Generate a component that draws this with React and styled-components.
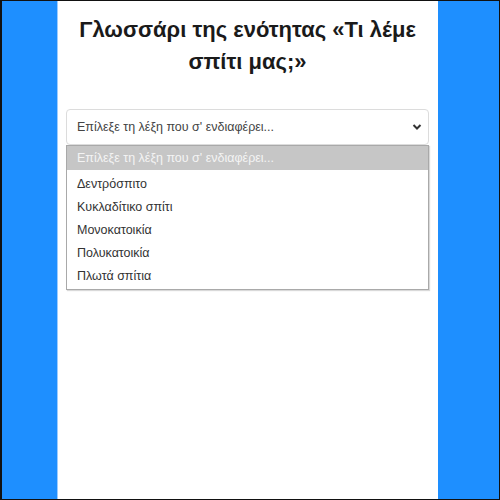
import styled, { createGlobalStyle } from 'styled-components';

const GlobalStyle = createGlobalStyle`
  html, body {
    margin: 0;
    padding: 0;
    background: #fff;
  }
  * {
    box-sizing: border-box;
  }
`;

const words = [
  'Δεντρόσπιτο',
  'Κυκλαδίτικο σπίτι',
  'Μονοκατοικία',
  'Πολυκατοικία',
  'Πλωτά σπίτια',
];

export default function App() {
  return (
    <>
      <GlobalStyle />
      <Frame>
        <Side />
        <Page>
          <Title>
            Γλωσσάρι της ενότητας «Τι λέμε
            <br />
            σπίτι μας;»
          </Title>

          <SelectArea>
            <SelectBox>
              <span>Επίλεξε τη λέξη που σ' ενδιαφέρει...</span>
              <svg width="10" height="8" viewBox="0 0 10 8">
                <path
                  d="M1.5 2 L5 5.5 L8.5 2"
                  fill="none"
                  stroke="#333"
                  strokeWidth="2"
                />
              </svg>
            </SelectBox>

            <OptionList>
              <Option $active>Επίλεξε τη λέξη που σ' ενδιαφέρει...</Option>
              {words.map((w) => (
                <Option key={w}>{w}</Option>
              ))}
            </OptionList>
          </SelectArea>
        </Page>
        <Side />
      </Frame>
    </>
  );
}

const Frame = styled.main`
  display: grid;
  grid-template-columns: 55px 381px 1fr;
  width: 500px;
  height: 500px;
  border: 1px solid #111;
  border-left-width: 2px;
  background: #1e8fff;
  font-family: 'Liberation Sans', Arial, sans-serif;
`;

const Side = styled.div`
  background: #1e8fff;
`;

const Page = styled.section`
  display: flex;
  flex-direction: column;
  align-items: center;
  padding: 13px 9px 0 8px;
  background: #fff;
  border-left: 1px solid #9cccff;
`;

const Title = styled.h1`
  margin: 0;
  font-size: 22px;
  line-height: 32px;
  font-weight: 700;
  color: #1a1a1a;
  text-align: center;
`;

const SelectArea = styled.div`
  width: 100%;
  margin-top: 31px;
`;

const SelectBox = styled.div`
  display: flex;
  align-items: center;
  justify-content: space-between;
  height: 36px;
  padding: 0 6px 0 10px;
  border: 1px solid #dcdcdc;
  border-radius: 4px;
  font-size: 12.5px;
  color: #444;
`;

const OptionList = styled.ul`
  margin: 0;
  padding: 0 0 1px 0;
  list-style: none;
  border: 1px solid #a9a9a9;
  box-shadow: 1px 1px 1px rgba(0, 0, 0, 0.15);
`;

const Option = styled.li`
  height: ${(p) => (p.$active ? '24px' : '23px')};
  line-height: ${(p) => (p.$active ? '24px' : '23px')};
  margin-bottom: ${(p) => (p.$active ? '3px' : '0')};
  padding-left: 10px;
  font-size: 12.5px;
  color: ${(p) => (p.$active ? '#f4f4f4' : '#333')};
  background: ${(p) => (p.$active ? '#c6c6c6' : '#fff')};
`;
